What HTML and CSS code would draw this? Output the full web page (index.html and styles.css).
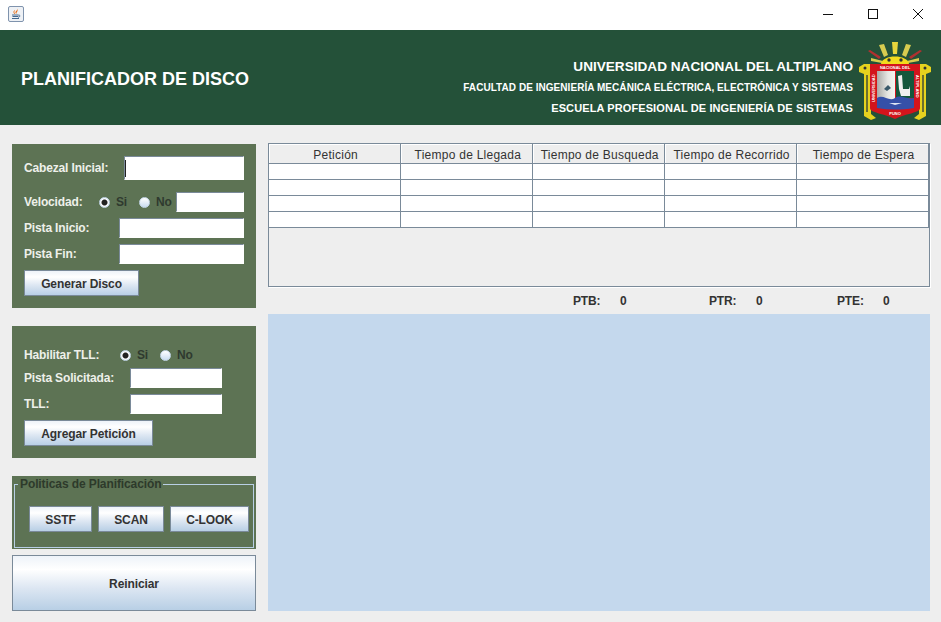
FILE: index.html
```html
<!DOCTYPE html>
<html lang="es">
<head>
    <meta charset="UTF-8">
    <title>Planificador de Disco</title>
    <link rel="stylesheet" href="styles.css">
</head>
<body>

<!-- Window title bar -->
<div class="titlebar">
    <svg class="java-icon" width="16" height="16" viewBox="0 0 16 16">
        <rect x="0.5" y="0.5" width="15" height="15" rx="1.5" fill="#eef1f5" stroke="#7f93ad"/>
        <path d="M9 2.5C10 4.5 7 5 7.500 7C8 8 8.500 8 8.500 8C7.500 6.500 11 5.500 9 2.500Z" fill="#e8701a"/>
        <path d="M6.500 4.500C5.500 6 6 7 6.800 8" stroke="#e8701a" fill="none"/>
        <path d="M4 9H10.500M4.500 10.500H10M4 12.500H11" stroke="#44688f"/>
        <path d="M10.500 9.200C12.500 8.800 12.500 11 10 11.200" stroke="#44688f" fill="none"/>
    </svg>
    <div class="window-controls">
        <svg width="10" height="10" viewBox="0 0 10 10"><path d="M0 5.500H10" stroke="#111"/></svg>
        <svg width="10" height="10" viewBox="0 0 10 10"><rect x="0.500" y="0.500" width="9" height="9" fill="none" stroke="#111"/></svg>
        <svg width="10" height="10" viewBox="0 0 10 10"><path d="M0 0L10 10M10 0L0 10" stroke="#111"/></svg>
    </div>
</div>

<!-- Header -->
<header class="banner">
    <h1>PLANIFICADOR DE DISCO</h1>
    <div class="university">
        <p class="uni-name">UNIVERSIDAD NACIONAL DEL ALTIPLANO</p>
        <p class="uni-faculty">FACULTAD DE INGENIERÍA MECÁNICA ELÉCTRICA, ELECTRÓNICA Y SISTEMAS</p>
        <p class="uni-school">ESCUELA PROFESIONAL DE INGENIERÍA DE SISTEMAS</p>
    </div>
    <svg class="crest" width="72" height="78" viewBox="0 0 72 78">
        <defs>
            <linearGradient id="crest-white" x1="0" x2="1" y1="0" y2="0">
                <stop offset="0" stop-color="#a9a9a6"/>
                <stop offset="0.6" stop-color="#e6e6e2"/>
                <stop offset="1" stop-color="#f4f4f0"/>
            </linearGradient>
        </defs>
        <!-- sun rays -->
        <path d="M33 0H39L38 12H34Z" fill="#e8d53c"/>
        <path d="M20 3L25 2L29 13L25 15Z" fill="#d8cc50"/>
        <path d="M52 3L47 2L43 13L47 15Z" fill="#d8cc50"/>
        <path d="M9 9L11 8L22 15L20 17Z" fill="#b03030"/>
        <path d="M63 9L61 8L50 15L52 17Z" fill="#b03030"/>
        <path d="M12 16L24 19L23 21L12 19Z" fill="#d8cc50"/>
        <path d="M60 16L48 19L49 21L60 19Z" fill="#d8cc50"/>
        <path d="M22 22C23 12 49 12 50 22Z" fill="#f2da1e"/>
        <circle cx="30" cy="18" r="1.700" fill="#333"/>
        <circle cx="42" cy="18" r="1.700" fill="#333"/>
        <!-- side columns -->
        <path d="M0 25L5 22H12V72L17 76L12 78L5 74V32L0 30Z" fill="#e6d21e"/>
        <path d="M72 25L67 22H60V72L55 76L60 78L67 74V32L72 30Z" fill="#e6d21e"/>
        <path d="M7 33H9V70H7ZM63 33H65V70H63Z" fill="#6c6f2e"/>
        <circle cx="6" cy="26" r="1.500" fill="#333"/>
        <circle cx="66" cy="26" r="1.500" fill="#333"/>
        <!-- shield -->
        <path d="M11 22H61V66C61 71 48 71 36 77C24 71 11 71 11 66Z" fill="#d3141c"/>
        <path d="M18 29H36V58H18Z" fill="url(#crest-white)"/>
        <path d="M37 29H55V56H37Z" fill="#14573c"/>
        <path d="M18 56C24 52 30 60 36 56C42 52 48 58 55 56V66C42 68 30 68 18 66Z" fill="#3550a8"/>
        <path d="M39 34L43 33L44 47H50L51 44V54H42L40 47Z" fill="#f0f0f0"/>
        <path d="M29 43L32 46L28 49L25 47Z" fill="#3b5a6a"/>
        <path d="M30 61H43L36 63Z" fill="#dfe6f4"/>
        <text class="crest-text" x="36" y="27" text-anchor="middle">NACIONAL DEL</text>
        <text class="crest-text" x="36" y="72.500" text-anchor="middle">PUNO</text>
        <text class="crest-text" transform="translate(16 60) rotate(-90)">UNIVERSIDAD</text>
        <text class="crest-text" transform="translate(57 33) rotate(90)">ALTIPLANO</text>
    </svg>
</header>

<main class="content">
    <!-- Left column with the forms -->
    <aside class="sidebar">
        <section class="panel panel-disk">
            <div class="row row-first">
                <label class="field-label">Cabezal Inicial:</label>
                <input class="field field-tall" type="text">
            </div>
            <div class="row">
                <label class="field-label label-speed">Velocidad:</label>
                <span class="radio radio-on"></span><span class="radio-text text-si">Si</span>
                <span class="radio"></span><span class="radio-text text-no">No</span>
                <input class="field field-speed" type="text">
            </div>
            <div class="row">
                <label class="field-label">Pista Inicio:</label>
                <input class="field field-track" type="text">
            </div>
            <div class="row">
                <label class="field-label">Pista Fin:</label>
                <input class="field field-track" type="text">
            </div>
            <button class="btn btn-generate" type="button">Generar Disco</button>
        </section>

        <section class="panel panel-request">
            <div class="row row-tll">
                <label class="field-label label-tll">Habilitar TLL:</label>
                <span class="radio radio-on"></span><span class="radio-text text-si">Si</span>
                <span class="radio"></span><span class="radio-text">No</span>
            </div>
            <div class="row">
                <label class="field-label label-request">Pista Solicitada:</label>
                <input class="field field-request" type="text">
            </div>
            <div class="row">
                <label class="field-label label-request">TLL:</label>
                <input class="field field-request" type="text">
            </div>
            <button class="btn btn-add" type="button">Agregar Petición</button>
        </section>

        <section class="panel panel-policies">
            <fieldset class="policies">
                <legend>Politicas de Planificación</legend>
                <button class="btn btn-sstf" type="button">SSTF</button>
                <button class="btn btn-scan" type="button">SCAN</button>
                <button class="btn btn-clook" type="button">C-LOOK</button>
            </fieldset>
        </section>

        <button class="btn btn-reset" type="button">Reiniciar</button>
    </aside>

    <!-- Right column: table, totals and chart area -->
    <div class="results">
        <div class="table-box">
            <table class="requests">
                <thead>
                    <tr>
                        <th>Petición</th>
                        <th>Tiempo de Llegada</th>
                        <th>Tiempo de Busqueda</th>
                        <th>Tiempo de Recorrido</th>
                        <th>Tiempo de Espera</th>
                    </tr>
                </thead>
                <tbody>
                    <tr><td></td><td></td><td></td><td></td><td></td></tr>
                    <tr><td></td><td></td><td></td><td></td><td></td></tr>
                    <tr><td></td><td></td><td></td><td></td><td></td></tr>
                    <tr><td></td><td></td><td></td><td></td><td></td></tr>
                </tbody>
            </table>
        </div>
        <div class="totals">
            <span class="total-name name-ptb">PTB:</span><span class="total-value value-ptb">0</span>
            <span class="total-name name-ptr">PTR:</span><span class="total-value value-ptr">0</span>
            <span class="total-name name-pte">PTE:</span><span class="total-value">0</span>
        </div>
        <div class="chart"></div>
    </div>
</main>

</body>
</html>
```

FILE: styles.css
```css
* {
    box-sizing: border-box;
}

body {
    margin: 0;
    width: 941px;
    height: 622px;
    overflow: hidden;
    background-color: #eeeeee;
    font-family: "Liberation Sans", Arial, sans-serif;
    font-size: 12px;
    color: #333333;
}

/* Title bar */
.titlebar {
    height: 30px;
    background-color: #ffffff;
    display: flex;
    align-items: center;
    justify-content: space-between;
    padding: 0 18px 0 8px;
}

.java-icon {
    margin-top: -2px;
}

.window-controls {
    display: flex;
    gap: 35px;
    margin-top: -2px;
}

/* Header */
.banner {
    height: 95px;
    background-color: #245139;
    display: flex;
    align-items: center;
    padding: 0 10px 0 21px;
    color: #ffffff;
}

.banner h1 {
    margin: 0 auto 0 0;
    font-size: 18px;
    line-height: 22px;
    padding-top: 2px;
}

.university {
    align-self: flex-start;
    margin: 28px 6px 0 0;
    text-align: right;
    font-weight: bold;
}

.university p {
    margin: 0;
}

.university .uni-name {
    font-size: 13.6px;
    line-height: 17px;
}

.university .uni-faculty {
    font-size: 10px;
    line-height: 12px;
    letter-spacing: 0.05px;
    margin-top: 7px;
}

.university .uni-school {
    font-size: 11px;
    line-height: 14px;
    letter-spacing: 0.1px;
    margin-top: 7px;
}

.crest {
    flex: none;
    align-self: flex-start;
    margin-top: 12px;
}

.crest-text {
    font-size: 4px;
    font-weight: bold;
    fill: #ffffff;
}

/* Main area */
.content {
    display: flex;
    padding: 19px 11px 0 12px;
    gap: 12px;
}

.sidebar {
    width: 244px;
    flex: none;
    display: flex;
    flex-direction: column;
}

.panel {
    background-color: #5d7354;
}

.panel-disk {
    height: 164px;
    padding: 12px 12px 0;
}

.panel-request {
    height: 132px;
    margin-top: 18px;
    padding: 19px 12px 0;
}

.panel-policies {
    height: 73px;
    margin-top: 18px;
    padding: 1px 2px 0;
}

.row {
    display: flex;
    align-items: center;
    height: 20px;
    margin-bottom: 6px;
}

.row-first {
    height: 24px;
    margin-bottom: 12px;
}

.row-tll {
    margin-bottom: 3px;
}

.field-label {
    font-weight: bold;
    letter-spacing: -0.15px;
    color: #eef0ea;
    margin-right: auto;
}

.label-speed {
    width: 74px;
    margin-right: 0;
}

.label-tll {
    width: 95px;
    margin-right: 0;
}

.label-request {
    width: 106px;
    margin-right: 0;
}

.field {
    height: 20px;
    padding: 0;
    background-color: #ffffff;
    border: 1px solid #ffffff;
    border-top-color: #7a8a99;
    border-left-color: #7a8a99;
    outline: none;
}

.field-tall {
    width: 120px;
    height: 24px;
    background: linear-gradient(#222222, #222222) 0 center / 1px 17px no-repeat #ffffff;
}

.field-speed {
    width: 68px;
    margin-left: auto;
}

.field-track {
    width: 125px;
}

.field-request {
    width: 92px;
}

/* Radio buttons */
.radio {
    width: 11px;
    height: 11px;
    flex: none;
    margin-left: 1px;
    border-radius: 50%;
    border: 1px solid #c4d6e8;
    background: linear-gradient(#ffffff, #c9dcf0);
}

.radio-on {
    background: radial-gradient(circle, #222222 0 2.5px, #ffffff 3.5px, #c9dcf0 100%);
}

.radio-text {
    font-weight: bold;
    letter-spacing: -0.15px;
    color: #2f3a2f;
    margin-left: 6px;
}

.text-si {
    width: 22px;
}

/* Buttons */
.btn {
    display: block;
    padding: 1px 0 0;
    height: 26px;
    font-family: inherit;
    font-size: 12px;
    font-weight: bold;
    letter-spacing: -0.1px;
    color: #333333;
    border: 1px solid #7a8a99;
    background: linear-gradient(#eef3f9, #ffffff 25%, #dce6f2 60%, #b8cfe5);
}

.btn-generate {
    width: 115px;
}

.btn-add {
    width: 129px;
}

.policies {
    margin: 0;
    height: 71px;
    padding: 15px 0 0;
    border: 1px solid #b8cfe5;
    display: flex;
    align-items: flex-start;
    gap: 6px;
}

.policies legend {
    margin-left: 3px;
    padding: 0 2px;
    height: 14px;
    line-height: 14px;
    font-weight: bold;
    letter-spacing: -0.1px;
    color: #2d3a2b;
}

.btn-sstf {
    width: 63px;
    margin-left: 14px;
}

.btn-scan {
    width: 66px;
}

.btn-clook {
    width: 79px;
}

.btn-reset {
    width: 244px;
    height: 56px;
    margin-top: 6px;
}

/* Table */
.results {
    flex: 1;
    margin-top: -1px;
}

.table-box {
    height: 144px;
    margin-right: 1px;
    border: 1px solid #7a8a99;
    box-shadow: 1px 1px 0 #ffffff;
}

.requests {
    border-collapse: collapse;
    table-layout: fixed;
    width: 660px;
}

.requests th {
    height: 19px;
    padding: 3px 0 0 2px;
    font-weight: normal;
    letter-spacing: 0.25px;
    color: #333333;
    background-color: #eeeeee;
    border-right: 1px solid #7a8a99;
    border-bottom: 1px solid #7a8a99;
    box-shadow: inset 1px 1px 0 #ffffff;
}

.requests td {
    height: 16px;
    padding: 0;
    background-color: #ffffff;
    border-right: 1px solid #7a8a99;
    border-bottom: 1px solid #7a8a99;
}

/* Totals */
.totals {
    height: 27px;
    display: flex;
    align-items: center;
    padding-left: 305px;
    font-weight: bold;
    letter-spacing: -0.15px;
}

.total-name {
    width: 47px;
}

.value-ptb {
    width: 89px;
}

.value-ptr {
    width: 81px;
}

.name-pte {
    width: 46px;
}

.chart {
    width: 662px;
    height: 297px;
    background-color: #c4d8ed;
}
```
